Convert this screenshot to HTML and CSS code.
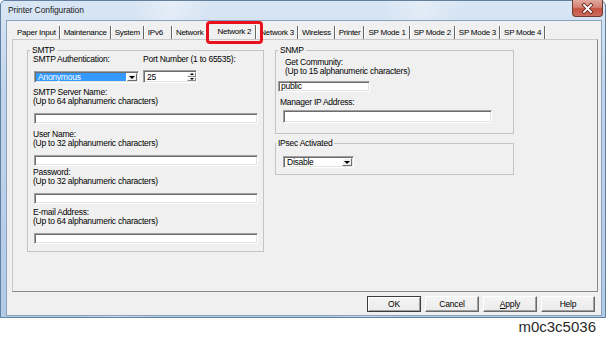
FILE: index.html
```html
<!DOCTYPE html>
<html lang="en">
<head>
    <meta charset="UTF-8">
    <title>Printer Configuration</title>
    <link rel="stylesheet" href="styles.css">
</head>
<body>
    <div class="window">
        <div class="titlebar">
            <span class="title">Printer Configuration</span>
            <div class="close-btn">
                <svg width="29" height="15" viewBox="0 0 29 15">
                    <path d="M11 4 L18 11 M18 4 L11 11" stroke="#6b2620" stroke-width="3.6" stroke-linecap="square"/>
                    <path d="M11 4 L18 11 M18 4 L11 11" stroke="#fff" stroke-width="1.8" stroke-linecap="square"/>
                </svg>
            </div>
        </div>

        <div class="client">
            <div class="tabs">
                <span class="tab">Paper Input</span>
                <span class="tab">Maintenance</span>
                <span class="tab">System</span>
                <span class="tab wide">IPv6</span>
                <span class="tab">Network</span>
                <span class="tab active">Network 2</span>
                <span class="tab">Network 3</span>
                <span class="tab">Wireless</span>
                <span class="tab">Printer</span>
                <span class="tab">SP Mode 1</span>
                <span class="tab">SP Mode 2</span>
                <span class="tab">SP Mode 3</span>
                <span class="tab">SP Mode 4</span>
            </div>

            <div class="tab-panel">
                <fieldset class="group smtp">
                    <legend>SMTP</legend>
                    <div class="auth-row">
                        <div class="auth-col">
                            <div class="label">SMTP Authentication:</div>
                            <div class="combo">
                                <span class="combo-text">Anonymous</span>
                                <span class="drop-btn"><span class="arrow-down"></span></span>
                            </div>
                        </div>
                        <div class="port-col">
                            <div class="label">Port Number (1 to 65535):</div>
                            <div class="spin">
                                <span class="spin-text">25</span>
                                <span class="spin-btns">
                                    <span class="spin-btn"><span class="arrow-up"></span></span>
                                    <span class="spin-btn"><span class="arrow-down small"></span></span>
                                </span>
                            </div>
                        </div>
                    </div>

                    <div class="field-row">
                        <div class="label">SMTP Server Name:<br>(Up to 64 alphanumeric characters)</div>
                        <div class="textbox"></div>
                    </div>
                    <div class="field-row user">
                        <div class="label">User Name:<br>(Up to 32 alphanumeric characters)</div>
                        <div class="textbox"></div>
                    </div>
                    <div class="field-row pw">
                        <div class="label">Password:<br>(Up to 32 alphanumeric characters)</div>
                        <div class="textbox"></div>
                    </div>
                    <div class="field-row mail">
                        <div class="label">E-mail Address:<br>(Up to 64 alphanumeric characters)</div>
                        <div class="textbox"></div>
                    </div>
                </fieldset>

                <div class="right-col">
                    <fieldset class="group snmp">
                        <legend>SNMP</legend>
                        <div class="label community-label">Get Community:<br>(Up to 15 alphanumeric characters)</div>
                        <div class="textbox community-box">public</div>
                        <div class="label manager-label">Manager IP Address:</div>
                        <div class="textbox manager-box"></div>
                    </fieldset>

                    <fieldset class="group ipsec">
                        <legend>IPsec Activated</legend>
                        <div class="select">
                            <span class="select-text">Disable</span>
                            <span class="drop-btn"><span class="arrow-down"></span></span>
                        </div>
                    </fieldset>
                </div>
            </div>

            <div class="buttons">
                <button class="btn default">OK</button>
                <button class="btn">Cancel</button>
                <button class="btn"><u>A</u>pply</button>
                <button class="btn">Help</button>
            </div>
        </div>
    </div>

    <div class="caption">m0c3c5036</div>
</body>
</html>
```

FILE: styles.css
```css
*, *::before, *::after {
    box-sizing: border-box;
}

body {
    margin: 0;
    width: 608px;
    height: 343px;
    overflow: hidden;
    background: #fff;
    font-family: 'Liberation Sans', Arial, sans-serif;
    font-size: 8.5px;
    letter-spacing: -0.25px;
    color: #000;
}

/* window frame */
.window {
    width: 606px;
    height: 318px;
    display: flex;
    flex-direction: column;
    border: 1px solid #62809f;
    border-radius: 5px 6px 0 0;
    background:
        linear-gradient(100deg, rgba(255, 255, 255, 0) 20%, rgba(255, 255, 255, 0.35) 26%, rgba(255, 255, 255, 0) 32%,
            rgba(255, 255, 255, 0) 58%, rgba(255, 255, 255, 0.3) 64%, rgba(255, 255, 255, 0) 70%),
        linear-gradient(#d9e6f4, #c0d4ec 30%, #b3cae6);
}

.titlebar {
    height: 19px;
    display: flex;
    align-items: flex-start;
    padding-left: 7px;
}

.title {
    line-height: 19px;
    letter-spacing: -0.1px;
    color: #1b1b1b;
}

.close-btn {
    margin-left: auto;
    margin-right: 2px;
    margin-top: -1px;
    width: 31px;
    height: 17px;
    border: 1px solid #6f3a33;
    border-top: none;
    border-radius: 0 0 4px 4px;
    background: linear-gradient(#e2a99e, #d48373 45%, #c4523f 55%, #cd6d5c);
}

.close-btn svg {
    display: block;
    margin-top: 1px;
}

.client {
    flex: 1;
    margin: 0 3px 1px 5px;
    padding: 4px 0 3px 5px;
    display: flex;
    flex-direction: column;
    border: 1px solid #8aa2bf;
    background: #f0f0f0;
}

/* tab strip */
.tabs {
    height: 14px;
    display: flex;
    align-items: flex-end;
    padding-left: 1px;
}

.tab {
    height: 13px;
    line-height: 13px;
    padding: 0 3px 0 4px;
    white-space: nowrap;
    font-size: 8px;
    letter-spacing: -0.25px;
    border-right: 1px solid #666;
    box-shadow: 1px 0 0 #fff;
}

.tab.wide {
    padding-right: 8px;
}

.tab.active {
    position: relative;
    height: 14px;
    line-height: 13px;
    padding: 0 4px 0 10px;
}

/* red annotation frame */
.tab.active::after {
    content: '';
    position: absolute;
    left: -1px;
    right: -8px;
    top: -4px;
    bottom: -5px;
    border: 3px solid #e8101a;
    border-radius: 4px;
}

.tab-panel {
    height: 253px;
    padding: 5px 0 0 14px;
    width: 586px;
    display: grid;
    grid-template-columns: 237px 239px;
    column-gap: 11px;
    align-items: start;
    border: 1px solid;
    border-color: #c9c9c9 #8a8a8a #8a8a8a #c9c9c9;
}

/* group boxes */
.group {
    margin: 0;
    min-width: 0;
    padding: 0 5px 7px;
    border: 1px solid #c4c4c4;
}

.group legend {
    padding: 0 2px;
    margin-left: -3px;
    line-height: 10px;
}

.label {
    line-height: 9px;
    white-space: nowrap;
}

.auth-row {
    display: flex;
}

.auth-col {
    width: 110px;
}

.textbox,
.combo,
.spin,
.select {
    background: #fff;
    border: 1px solid;
    border-color: #a0a0a0 #fff #fff #a0a0a0;
    box-shadow: inset 1px 1px 0 #6d6d6d, inset -1px -1px 0 #e3e3e3;
}

.combo {
    margin: 7px 0 0 1px;
    width: 105px;
    height: 12px;
    display: flex;
    padding: 1px;
}

.combo-text {
    flex: 1;
    background: #3399ff;
    color: #fff;
    line-height: 9px;
    padding-left: 2px;
    margin-right: 1px;
}

.drop-btn {
    width: 10px;
    display: flex;
    align-items: center;
    justify-content: center;
    background: #f0f0f0;
    border: 1px solid;
    border-color: #fff #6d6d6d #6d6d6d #fff;
}

.arrow-down {
    width: 0;
    height: 0;
    border-left: 3px solid transparent;
    border-right: 3px solid transparent;
    border-top: 3px solid #000;
}

.arrow-down.small,
.arrow-up {
    border-left-width: 2px;
    border-right-width: 2px;
    border-top-width: 2px;
}

.arrow-up {
    width: 0;
    height: 0;
    border-style: solid;
    border-color: transparent transparent #000;
    border-width: 0 2px 2px;
}

.spin {
    margin-top: 6px;
    width: 54px;
    height: 13px;
    display: flex;
    padding: 1px 0 1px 1px;
}

.spin-text {
    flex: 1;
    line-height: 10px;
    padding-left: 2px;
}

.spin-btns {
    width: 9px;
    display: flex;
    flex-direction: column;
}

.spin-btn {
    flex: 1;
    display: flex;
    align-items: center;
    justify-content: center;
    background: #f0f0f0;
    border: 1px solid;
    border-color: #fff #8a8a8a #8a8a8a #fff;
}

.field-row {
    margin-top: 5px;
}

.field-row.user {
    margin-top: 6px;
}

.field-row.pw {
    margin-top: 2px;
}

.field-row.mail {
    margin-top: 4px;
}

.field-row .textbox {
    margin: 7px 0 0 1px;
    height: 11px;
}

/* SNMP */
.snmp {
    padding-bottom: 10px;
}

.community-label {
    margin: 3px 0 0 4px;
}

.community-box {
    margin: 5px 0 0 -3px;
    width: 92px;
    height: 11px;
    line-height: 9px;
    padding-left: 2px;
}

.manager-label {
    margin: 6px 0 0 -1px;
}

.manager-box {
    margin: 3px 0 0 2px;
    width: 209px;
    height: 13px;
}

.ipsec {
    margin-top: 4px;
    padding-bottom: 6px;
}

.ipsec legend {
    margin-left: -5px;
}

.select {
    margin: 8px 0 0 2px;
    width: 71px;
    height: 12px;
    display: flex;
    padding: 1px;
}

.select-text {
    flex: 1;
    line-height: 9px;
    padding-left: 2px;
}

/* dialog buttons */
.buttons {
    height: 16px;
    margin-top: 4px;
    padding-right: 6px;
    display: flex;
    justify-content: flex-end;
    gap: 4px;
}

.btn {
    width: 54px;
    height: 16px;
    padding: 0;
    font: inherit;
    letter-spacing: -0.2px;
    color: #000;
    background: linear-gradient(#f4f4f4, #ebebeb);
    border: 1px solid;
    border-color: #fff #696969 #696969 #fff;
    box-shadow: inset -1px -1px 0 #a0a0a0;
}

.btn.default {
    border-color: #3c3c3c;
    box-shadow: inset 1px 1px 0 #fff, inset -1px -1px 0 #a0a0a0;
}

.caption {
    margin-top: 1px;
    padding-right: 12px;
    text-align: right;
    font-size: 15px;
    line-height: 16px;
    letter-spacing: 0;
    color: #2a2a2a;
}
```
